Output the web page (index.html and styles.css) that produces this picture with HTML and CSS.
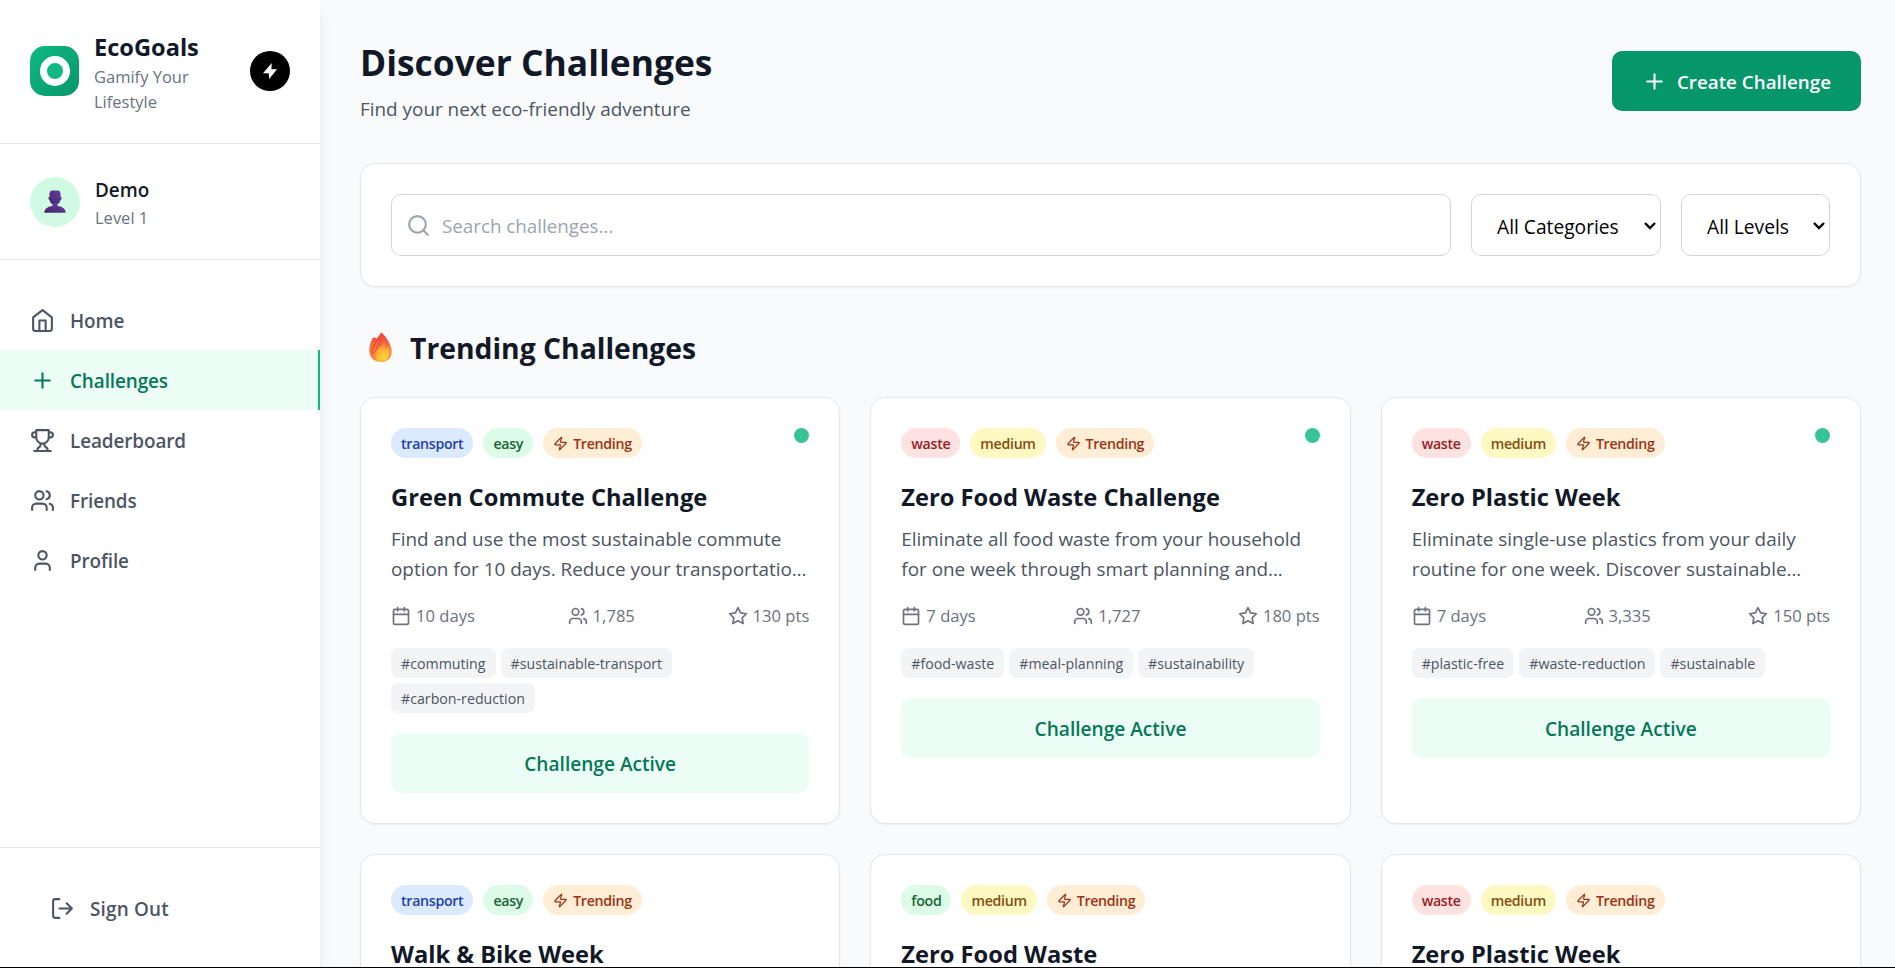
FILE: index.html
```html
<!DOCTYPE html>
<html lang="en">
<head>
    <meta charset="UTF-8">
    <meta name="viewport" content="width=device-width, initial-scale=1.0">
    <title>EcoGoals</title>
    <link rel="stylesheet" href="styles.css">
</head>
<body>
    <!-- Icon sprite -->
    <svg class="sprite" aria-hidden="true">
        <symbol id="home" viewBox="0 0 24 24"><path d="m3 9 9-7 9 7v11a2 2 0 0 1-2 2H5a2 2 0 0 1-2-2z"/><path d="M9 22V12h6v10"/></symbol>
        <symbol id="plus" viewBox="0 0 24 24"><path d="M5 12h14M12 5v14"/></symbol>
        <symbol id="trophy" viewBox="0 0 24 24"><path d="M6 9H4.5a2.5 2.5 0 0 1 0-5H6M18 9h1.5a2.5 2.5 0 0 0 0-5H18M4 22h16M10 14.66V17c0 .55-.47.98-.97 1.21C7.85 18.75 7 20.24 7 22M14 14.66V17c0 .55.47.98.97 1.21C16.15 18.75 17 20.24 17 22M18 2H6v7a6 6 0 0 0 12 0V2Z"/></symbol>
        <symbol id="users" viewBox="0 0 24 24"><path d="M16 21v-2a4 4 0 0 0-4-4H6a4 4 0 0 0-4 4v2"/><circle cx="9" cy="7" r="4"/><path d="M22 21v-2a4 4 0 0 0-3-3.87M16 3.13a4 4 0 0 1 0 7.75"/></symbol>
        <symbol id="user" viewBox="0 0 24 24"><path d="M19 21v-2a4 4 0 0 0-4-4H9a4 4 0 0 0-4 4v2"/><circle cx="12" cy="7" r="4"/></symbol>
        <symbol id="logout" viewBox="0 0 24 24"><path d="M9 21H5a2 2 0 0 1-2-2V5a2 2 0 0 1 2-2h4M16 17l5-5-5-5M21 12H9"/></symbol>
        <symbol id="search" viewBox="0 0 24 24"><circle cx="11" cy="11" r="8"/><path d="m21 21-4.35-4.35"/></symbol>
        <symbol id="zap" viewBox="0 0 24 24"><path d="M4 14a1 1 0 0 1-.78-1.63l9.9-10.2a.5.5 0 0 1 .86.46l-1.92 6.02A1 1 0 0 0 13 10h7a1 1 0 0 1 .78 1.63l-9.9 10.2a.5.5 0 0 1-.86-.46l1.92-6.02A1 1 0 0 0 11 14z"/></symbol>
        <symbol id="calendar" viewBox="0 0 24 24"><path d="M8 2v4M16 2v4M3 10h18"/><rect x="3" y="4" width="18" height="18" rx="2"/></symbol>
        <symbol id="star" viewBox="0 0 24 24"><path d="m12 2 3.09 6.26L22 9.27l-5 4.87 1.18 6.88L12 17.77l-6.18 3.25L7 14.14 2 9.27l6.91-1.01z"/></symbol>
    </svg>

    <aside class="sidebar">
        <div class="brand">
            <div class="logo"><div class="logo-ring"></div></div>
            <div class="brand-text">
                <h1>EcoGoals</h1>
                <p>Gamify Your<br>Lifestyle</p>
            </div>
            <div class="bolt-badge">
                <svg viewBox="0 0 40 40"><path d="M21.8 12 13 22.2h5.7L19.2 28 27 18.2h-5.6z" fill="#fff"/></svg>
            </div>
        </div>
        <div class="user">
            <div class="avatar">
                <svg viewBox="0 0 22 23">
                    <defs><linearGradient id="bust" x1="0" y1="1" x2="1" y2="0"><stop offset="0" stop-color="#43246b"/><stop offset="1" stop-color="#673f9c"/></linearGradient></defs>
                    <g fill="url(#bust)">
                        <path d="M5.500 4C5.500 1.500 6.500.5 8.500.5h5c2 0 3 1 3 3.500v5c0 3.500-2.500 6-5.500 6S5.500 12.500 5.500 9z"/>
                        <path d="M4.500 7h13v1.500l-.6 1.500H5.100l-.6-1.500z"/>
                        <path d="M8.500 13h5v3c4.500.3 8 2.500 8.200 6.800H.3C.5 18.500 4 16.300 8.500 16z"/>
                    </g>
                </svg>
            </div>
            <div>
                <div class="user-name">Demo</div>
                <div class="user-level">Level 1</div>
            </div>
        </div>
        <nav class="nav">
            <a class="nav-item"><svg class="icon"><use href="#home"/></svg><span>Home</span></a>
            <a class="nav-item active"><svg class="icon"><use href="#plus"/></svg><span>Challenges</span></a>
            <a class="nav-item"><svg class="icon"><use href="#trophy"/></svg><span>Leaderboard</span></a>
            <a class="nav-item"><svg class="icon"><use href="#users"/></svg><span>Friends</span></a>
            <a class="nav-item"><svg class="icon"><use href="#user"/></svg><span>Profile</span></a>
        </nav>
        <div class="sidebar-footer">
            <a class="sign-out"><svg class="icon"><use href="#logout"/></svg><span>Sign Out</span></a>
        </div>
    </aside>

    <main class="main">
        <header class="page-header">
            <div>
                <h2 class="page-title">Discover Challenges</h2>
                <p class="page-subtitle">Find your next eco-friendly adventure</p>
            </div>
            <button class="create-btn"><svg class="icon"><use href="#plus"/></svg><span>Create Challenge</span></button>
        </header>

        <div class="filters">
            <label class="search">
                <svg class="icon"><use href="#search"/></svg>
                <input type="text" placeholder="Search challenges...">
            </label>
            <select class="select categories"><option>All Categories</option></select>
            <select class="select levels"><option>All Levels</option></select>
        </div>

        <h3 class="section-title">
            <svg class="fire" viewBox="0 0 24 31">
                <defs>
                    <linearGradient id="flame" x1="0" y1="0" x2="0" y2="1"><stop offset="0" stop-color="#f0383c"/><stop offset=".5" stop-color="#fb7240"/><stop offset="1" stop-color="#f98b3a"/></linearGradient>
                    <radialGradient id="glow" cx=".6" cy=".8" r=".7"><stop offset="0" stop-color="#ffd835"/><stop offset=".6" stop-color="#fdb039"/><stop offset="1" stop-color="#fb8040"/></radialGradient>
                </defs>
                <path fill="url(#flame)" d="M12.500 0C16 3 19.500 7 21 11c2 4 3 7 2.500 11-.7 5.500-4 9-11.500 9C5 31 .7 26.500.3 20 0 14.500 2 10 3.500 6.500 5 5 7 5.500 8 6.500 9.500 4.500 11.500 3 12.500 0z"/>
                <path fill="none" stroke="#cf5230" stroke-width="1" d="M10 6C8 12 2 15 3.500 23M13 8c-1 5-7 8-6.500 15"/>
                <path fill="url(#glow)" d="M16 10c1 3.500 1.500 5.500 1 7.500L20.500 14c3 6 2.500 16.500-8 16.500C4 30.500 4.500 22 8.500 18c3.500-3 6.500-4 7.500-8z"/>
            </svg>
            <span>Trending Challenges</span>
        </h3>

        <div class="grid">
            <article class="card">
                <div class="card-top">
                    <div class="badges">
                        <span class="badge blue">transport</span>
                        <span class="badge green">easy</span>
                        <span class="badge orange"><svg class="icon"><use href="#zap"/></svg>Trending</span>
                    </div>
                    <span class="dot"></span>
                </div>
                <h4>Green Commute Challenge</h4>
                <p class="desc">Find and use the most sustainable commute<br>option for 10 days. Reduce your transportatio…</p>
                <div class="stats">
                    <span><svg class="icon"><use href="#calendar"/></svg>10 days</span>
                    <span><svg class="icon"><use href="#users"/></svg>1,785</span>
                    <span><svg class="icon"><use href="#star"/></svg>130 pts</span>
                </div>
                <div class="tags">
                    <span>#commuting</span>
                    <span>#sustainable-transport</span>
                    <span>#carbon-reduction</span>
                </div>
                <div class="status">Challenge Active</div>
            </article>

            <article class="card">
                <div class="card-top">
                    <div class="badges">
                        <span class="badge red">waste</span>
                        <span class="badge yellow">medium</span>
                        <span class="badge orange"><svg class="icon"><use href="#zap"/></svg>Trending</span>
                    </div>
                    <span class="dot"></span>
                </div>
                <h4>Zero Food Waste Challenge</h4>
                <p class="desc">Eliminate all food waste from your household<br>for one week through smart planning and…</p>
                <div class="stats">
                    <span><svg class="icon"><use href="#calendar"/></svg>7 days</span>
                    <span><svg class="icon"><use href="#users"/></svg>1,727</span>
                    <span><svg class="icon"><use href="#star"/></svg>180 pts</span>
                </div>
                <div class="tags">
                    <span>#food-waste</span>
                    <span>#meal-planning</span>
                    <span>#sustainability</span>
                </div>
                <div class="status">Challenge Active</div>
            </article>

            <article class="card">
                <div class="card-top">
                    <div class="badges">
                        <span class="badge red">waste</span>
                        <span class="badge yellow">medium</span>
                        <span class="badge orange"><svg class="icon"><use href="#zap"/></svg>Trending</span>
                    </div>
                    <span class="dot"></span>
                </div>
                <h4>Zero Plastic Week</h4>
                <p class="desc">Eliminate single-use plastics from your daily<br>routine for one week. Discover sustainable…</p>
                <div class="stats">
                    <span><svg class="icon"><use href="#calendar"/></svg>7 days</span>
                    <span><svg class="icon"><use href="#users"/></svg>3,335</span>
                    <span><svg class="icon"><use href="#star"/></svg>150 pts</span>
                </div>
                <div class="tags">
                    <span>#plastic-free</span>
                    <span>#waste-reduction</span>
                    <span>#sustainable</span>
                </div>
                <div class="status">Challenge Active</div>
            </article>

            <article class="card">
                <div class="card-top">
                    <div class="badges">
                        <span class="badge blue">transport</span>
                        <span class="badge green">easy</span>
                        <span class="badge orange"><svg class="icon"><use href="#zap"/></svg>Trending</span>
                    </div>
                </div>
                <h4>Walk &amp; Bike Week</h4>
            </article>

            <article class="card">
                <div class="card-top">
                    <div class="badges">
                        <span class="badge green">food</span>
                        <span class="badge yellow">medium</span>
                        <span class="badge orange"><svg class="icon"><use href="#zap"/></svg>Trending</span>
                    </div>
                </div>
                <h4>Zero Food Waste</h4>
            </article>

            <article class="card">
                <div class="card-top">
                    <div class="badges">
                        <span class="badge red">waste</span>
                        <span class="badge yellow">medium</span>
                        <span class="badge orange"><svg class="icon"><use href="#zap"/></svg>Trending</span>
                    </div>
                </div>
                <h4>Zero Plastic Week</h4>
            </article>
        </div>
    </main>
</body>
</html>
```

FILE: styles.css
```css
* {
    box-sizing: border-box;
    margin: 0;
    padding: 0;
}
body {
    display: flex;
    height: 100vh;
    overflow: hidden;
    border-bottom: 1px solid #000;
    background: #f9fafb;
    color: #111827;
    font-family: "Segoe UI", "Open Sans", "Noto Sans", sans-serif;
    font-size: 18.9px;
    line-height: 30px;
}
.sprite {
    position: absolute;
    width: 0;
    height: 0;
}
.icon {
    width: 25px;
    height: 25px;
    flex-shrink: 0;
    fill: none;
    stroke: currentColor;
    stroke-width: 2;
    stroke-linecap: round;
    stroke-linejoin: round;
}

/* Sidebar */
.sidebar {
    display: flex;
    flex-direction: column;
    flex-shrink: 0;
    width: 320px;
    height: 968px;
    background: #fff;
    box-shadow: 0 10px 15px -3px rgba(0, 0, 0, 0.1), 0 4px 6px -4px rgba(0, 0, 0, 0.1);
}
.brand {
    display: flex;
    align-items: center;
    height: 144px;
    padding: 0 30px 1px;
    border-bottom: 1px solid #e5e7eb;
}
.logo {
    display: flex;
    align-items: center;
    justify-content: center;
    width: 49px;
    height: 50px;
    margin-right: 15px;
    border-radius: 15px;
    background: linear-gradient(135deg, #10b981, #059669);
}
.logo-ring {
    width: 30px;
    height: 30px;
    border: 7.5px solid #fff;
    border-radius: 50%;
    background: #10b981;
}
.brand-text {
    flex: 1;
    padding-top: 1px;
}
.brand-text h1 {
    font-size: 23.6px;
    line-height: 34px;
}
.brand-text p {
    color: #6b7280;
    font-size: 16.5px;
    line-height: 25px;
}
.bolt-badge {
    width: 40px;
    height: 40px;
    border-radius: 50%;
    background: #000;
}
.user {
    display: flex;
    align-items: center;
    gap: 15px;
    height: 116px;
    padding: 0 30px;
    border-bottom: 1px solid #e5e7eb;
}
.avatar {
    display: flex;
    align-items: center;
    justify-content: center;
    width: 50px;
    height: 50px;
    border-radius: 50%;
    background: #d1fae5;
}
.avatar svg {
    width: 22px;
    height: 23px;
}
.user-name {
    padding-top: 2px;
    font-weight: 600;
}
.user-level {
    color: #6b7280;
    font-size: 16.5px;
    line-height: 25px;
}
.nav {
    flex: 1;
    padding-top: 30px;
}
.nav-item {
    display: flex;
    align-items: center;
    gap: 15px;
    height: 60px;
    padding: 0 30px;
    color: #4b5563;
    font-weight: 600;
    letter-spacing: -0.1px;
}
.nav-item span,
.sign-out span,
.create-btn span {
    padding-top: 2px;
}
.nav-item.active {
    border-right: 2px solid #10b981;
    background: #ecfdf5;
    color: #047857;
}
.sidebar-footer {
    padding: 30px;
    border-top: 1px solid #e5e7eb;
}
.sign-out {
    display: flex;
    align-items: center;
    gap: 15px;
    height: 60px;
    padding: 0 20px;
    color: #4b5563;
    font-weight: 600;
    letter-spacing: 0.2px;
}

/* Main */
.main {
    flex: 1;
    padding: 40px 34px 0 40px;
}
.page-header {
    display: flex;
    align-items: center;
    justify-content: space-between;
    margin-bottom: 40px;
}
.page-title {
    padding-top: 1px;
    font-size: 35.4px;
    line-height: 43px;
    margin-bottom: 10px;
}
.page-subtitle {
    height: 29px;
    color: #4b5563;
}
.create-btn {
    display: flex;
    align-items: center;
    gap: 10px;
    height: 60px;
    margin-bottom: 1px;
    padding: 0 30px;
    border: none;
    border-radius: 10px;
    background: #059669;
    color: #fff;
    font: inherit;
    font-size: 18.8px;
    font-weight: 600;
}
.filters {
    display: flex;
    gap: 20px;
    padding: 30px;
    border: 1px solid #e5e7eb;
    border-radius: 15px;
    background: #fff;
    box-shadow: 0 1px 2px rgba(0, 0, 0, 0.05);
}
.search {
    display: flex;
    flex: 1;
    align-items: center;
    gap: 11px;
    height: 62px;
    padding: 0 14px;
    border: 1px solid #d1d5db;
    border-radius: 10px;
    color: #9ca3af;
}
.search input {
    flex: 1;
    padding-top: 2px;
    border: none;
    outline: none;
    background: none;
    font: inherit;
    font-size: 18.8px;
}
.search input::placeholder {
    color: #9ca3af;
}
.select {
    height: 62px;
    padding: 3px 0 0 25px;
    border: 1px solid #d1d5db;
    border-radius: 10px;
    appearance: none;
    background: #fff url("data:image/svg+xml,%3Csvg xmlns='http://www.w3.org/2000/svg' width='12' height='8'%3E%3Cpath d='M1 1l5 5 5-5' fill='none' stroke='%23000' stroke-width='2.4'/%3E%3C/svg%3E") no-repeat right 4px top 27px;
    color: #000;
    font: inherit;
    font-size: 19.2px;
}
.categories {
    width: 190px;
}
.levels {
    width: 149px;
}
.section-title {
    display: flex;
    align-items: center;
    gap: 18px;
    margin: 40px 0 30px;
    padding-left: 9px;
    font-size: 28.3px;
    line-height: 38px;
}
.section-title span {
    padding-top: 2px;
}
.fire {
    width: 23px;
    height: 30px;
}

/* Cards */
.grid {
    display: grid;
    grid-template-columns: repeat(3, 1fr);
    gap: 30px;
}
.card {
    padding: 30px;
    border: 1px solid #e5e7eb;
    border-radius: 15px;
    background: #fff;
    box-shadow: 0 1px 2px rgba(0, 0, 0, 0.05);
}
.card-top {
    display: flex;
    justify-content: space-between;
    margin-bottom: 20px;
}
.badges {
    display: flex;
    gap: 10px;
}
.badge {
    display: flex;
    align-items: center;
    gap: 5px;
    height: 30px;
    padding: 1px 10px 0;
    border-radius: 15px;
    font-size: 14.2px;
    font-weight: 600;
    letter-spacing: -0.3px;
}
.badge .icon {
    width: 15px;
    height: 15px;
}
.blue {
    background: #dbeafe;
    color: #1e40af;
}
.green {
    background: #dcfce7;
    color: #166534;
}
.red {
    background: #fee2e2;
    color: #991b1b;
}
.yellow {
    background: #fef9c3;
    color: #854d0e;
}
.orange {
    background: #ffedd5;
    color: #9a3412;
}
.dot {
    width: 15px;
    height: 15px;
    border-radius: 50%;
    background: #36c592;
}
.card h4 {
    margin-bottom: 8px;
    padding-top: 2px;
    font-size: 23.7px;
    line-height: 35px;
}
.desc {
    margin-bottom: 19px;
    padding-top: 1px;
    color: #4b5563;
    white-space: nowrap;
}
.stats {
    display: flex;
    justify-content: space-between;
    margin-bottom: 20px;
    color: #6b7280;
    font-size: 16.6px;
    line-height: 25px;
}
.stats span {
    display: flex;
    align-items: center;
    gap: 5px;
}
.stats .icon {
    width: 20px;
    height: 20px;
}
.tags {
    display: flex;
    flex-wrap: wrap;
    gap: 5px;
    margin-bottom: 20px;
}
.tags span {
    height: 30px;
    padding: 1px 10px 0;
    border-radius: 7.5px;
    background: #f3f4f6;
    color: #4b5563;
    font-size: 14.2px;
}
.status {
    height: 60px;
    padding-top: 1px;
    border-radius: 10px;
    background: #ecfdf5;
    color: #047857;
    font-size: 19.1px;
    font-weight: 600;
    line-height: 60px;
    text-align: center;
}
```
